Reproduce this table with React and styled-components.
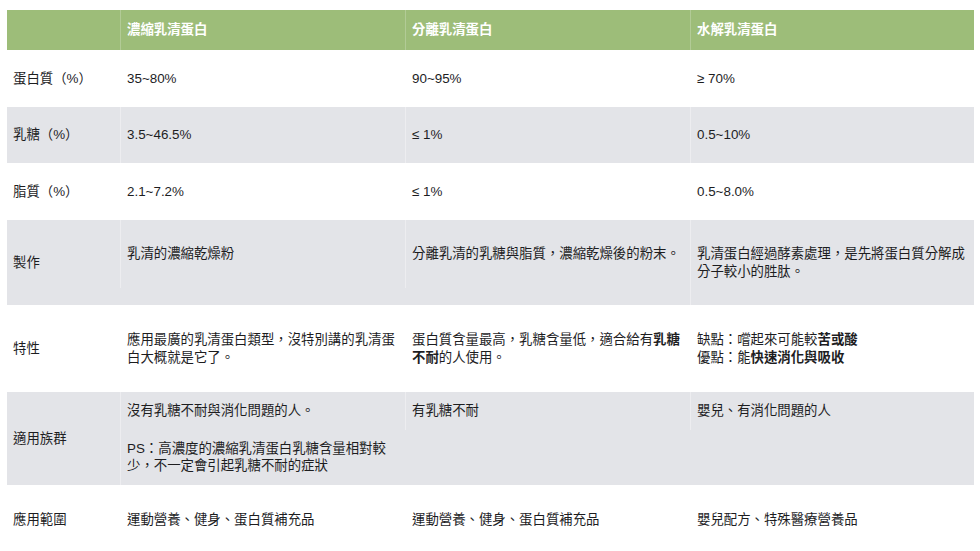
import styled, { createGlobalStyle } from 'styled-components';

const GlobalStyle = createGlobalStyle`
  html, body {
    margin: 0;
    padding: 0;
    background: #ffffff;
  }
  body {
    font-family: "Liberation Sans", "Noto Sans CJK TC", sans-serif;
    color: #1d1d1f;
  }
`;

const Page = styled.div`
  padding: 10px 6px 0 7px;
`;

const Table = styled.div`
  width: 967px;
  display: flex;
  flex-direction: column;
`;

const Row = styled.div`
  display: grid;
  grid-template-columns: 114px 285px 285px 283px;
  background: ${p => (p.$head ? '#9dbd79' : p.$shade ? '#e3e4e8' : '#ffffff')};
`;

const Cell = styled.div`
  padding: ${p => p.$pad}px 6px;
  font-size: 13.4px;
  line-height: 17.5px;
  color: ${p => (p.$head ? '#ffffff' : '#1d1d1f')};
  font-weight: ${p => (p.$head ? 700 : 400)};
  align-self: ${p => (p.$label ? 'center' : 'start')};
  border-left: 1px solid ${p => (p.$first ? 'transparent' : p.$head ? 'rgba(255,255,255,0.22)' : 'rgba(255,255,255,0.35)')};
  margin-left: -1px;
`;

const Para = styled.p`
  margin: 0;
  & + & {
    margin-top: 20px;
  }
`;

const Strong = styled.b`
  font-weight: 700;
`;

const rows = [
  { label: '蛋白質（%）', pad: 20, cells: ['35~80%', '90~95%', '≥ 70%'] },
  { label: '乳糖（%）', pad: 19, shade: true, cells: ['3.5~46.5%', '≤ 1%', '0.5~10%'] },
  { label: '脂質（%）', pad: 20, cells: ['2.1~7.2%', '≤ 1%', '0.5~8.0%'] },
  {
    label: '製作',
    pad: 25,
    shade: true,
    cells: [
      '乳清的濃縮乾燥粉',
      '分離乳清的乳糖與脂質，濃縮乾燥後的粉末。',
      '乳清蛋白經過酵素處理，是先將蛋白質分解成分子較小的胜肽。',
    ],
  },
  {
    label: '特性',
    pad: 26,
    cells: [
      '應用最廣的乳清蛋白類型，沒特別講的乳清蛋白大概就是它了。',
      <>蛋白質含量最高，乳糖含量低，適合給有<Strong>乳糖不耐</Strong>的人使用。</>,
      <>
        缺點：嚐起來可能較<Strong>苦或酸</Strong>
        <br />
        優點：能<Strong>快速消化與吸收</Strong>
      </>,
    ],
  },
  {
    label: '適用族群',
    pad: 10,
    shade: true,
    cells: [
      <>
        <Para>沒有乳糖不耐與消化問題的人。</Para>
        <Para>
          PS：高濃度的濃縮乳清蛋白乳糖含量相對較
          <br />
          少，不一定會引起乳糖不耐的症狀
        </Para>
      </>,
      '有乳糖不耐',
      '嬰兒、有消化問題的人',
    ],
  },
  {
    label: '應用範圍',
    pad: 26,
    cells: ['運動營養、健身、蛋白質補充品', '運動營養、健身、蛋白質補充品', '嬰兒配方、特殊醫療營養品'],
  },
];

const headers = ['', '濃縮乳清蛋白', '分離乳清蛋白', '水解乳清蛋白'];

export default function App() {
  return (
    <Page>
      <GlobalStyle />
      <Table>
        <Row $head>
          {headers.map((h, i) => (
            <Cell key={i} $head $pad={11} $first={i === 0}>
              {h}
            </Cell>
          ))}
        </Row>
        {rows.map(r => (
          <Row key={r.label} $shade={r.shade}>
            <Cell $label $first $pad={0}>
              {r.label}
            </Cell>
            {r.cells.map((c, i) => (
              <Cell key={i} $pad={r.pad}>
                {c}
              </Cell>
            ))}
          </Row>
        ))}
      </Table>
    </Page>
  );
}
